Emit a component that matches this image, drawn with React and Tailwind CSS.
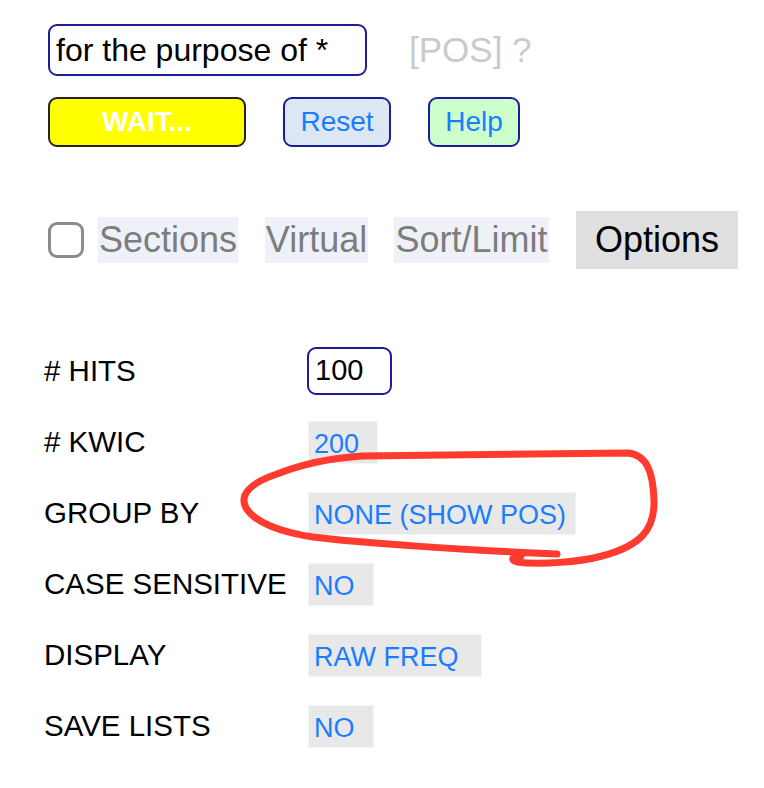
const rows = [
  { label: "# HITS", input: "100" },
  { label: "# KWIC", value: "200", width: "w-[70px]" },
  { label: "GROUP BY", value: "NONE (SHOW POS)", width: "w-[268px]" },
  { label: "CASE SENSITIVE", value: "NO", width: "w-[66px]" },
  { label: "DISPLAY", value: "RAW FREQ", width: "w-[174px]" },
  { label: "SAVE LISTS", value: "NO", width: "w-[66px]" },
]

export default function App() {
  return (
    <div className="relative h-[788px] w-[764px] overflow-hidden bg-white font-['Liberation_Sans',Arial,sans-serif]">
      <div className="pl-[48px] pt-[24px]">
        <div className="flex items-center">
          <div className="flex h-[52px] w-[319px] items-center rounded-[9px] border-2 border-[#1d1d9a] pl-[6px] text-[32px] text-black">
            for the purpose of *
          </div>
          <span className="ml-[42px] text-[35px] text-[#cacaca]">[POS] ?</span>
        </div>

        <div className="mt-[20px] flex items-center">
          <button className="flex h-[50px] w-[198px] items-center justify-center rounded-[9px] border-2 border-[#222] bg-[#ffff00] text-[28px] font-bold text-white">
            WAIT...
          </button>
          <button className="ml-[37px] flex h-[50px] w-[108px] items-center justify-center rounded-[9px] border-2 border-[#1d1d9a] bg-[#dde6f3] text-[28px] text-[#1a7dff]">
            Reset
          </button>
          <button className="ml-[37px] flex h-[50px] w-[92px] items-center justify-center rounded-[9px] border-2 border-[#1d1d9a] bg-[#ccffcc] text-[28px] text-[#1a7dff]">
            Help
          </button>
        </div>

        <div className="mt-[64px] flex h-[58px] items-center text-[36px] text-[#7d7d7d]">
          <div className="h-[36px] w-[36px] rounded-[9px] border-[3px] border-[#8c8c8c]" />
          <div className="ml-[14px] flex h-[46px] w-[140px] items-center justify-center bg-[#eef2f8]">Sections</div>
          <div className="ml-[27px] flex h-[46px] w-[103px] items-center justify-center bg-[#eef2f8]">Virtual</div>
          <div className="ml-[26px] flex h-[46px] w-[155px] items-center justify-center bg-[#eef2f8]">Sort/Limit</div>
          <div className="ml-[27px] flex h-[58px] w-[162px] items-center justify-center bg-[#e0e0e0] text-black">Options</div>
        </div>
      </div>

      <div className="mt-[67px] pl-[44px]">
        {rows.map((row) => (
          <div key={row.label} className="flex h-[71px] items-center">
            <span className="w-[264px] whitespace-nowrap text-[29.5px] text-black">{row.label}</span>
            {row.input ? (
              <div className="-ml-px flex h-[48px] w-[85px] items-center rounded-[9px] border-2 border-[#1d1d9a] pl-[6px] text-[29px] text-black">
                {row.input}
              </div>
            ) : (
              <div className={`flex h-[43px] items-center border border-[#f4f4f4] bg-[#e8e8e8] pl-[5px] pt-[4px] text-[27px] text-[#1a7dff] ${row.width}`}>
                {row.value}
              </div>
            )}
          </div>
        ))}
      </div>

      <svg className="pointer-events-none absolute left-0 top-0" width="764" height="788" viewBox="0 0 764 788">
        <path
          d="M557 554 C480 551 360 543 313 537 C280 532 255 522 246 508 C239 495 250 483 277 474 C300 465 330 458 362 456 L628 453 C647 455 653 472 654 500 C655 530 640 546 602 556 C580 562 540 565 517 562 C510 560 512 556 521 556"
          fill="none"
          stroke="#ff3b30"
          strokeWidth="7"
          strokeLinecap="round"
          strokeLinejoin="round"
        />
      </svg>
    </div>
  )
}
